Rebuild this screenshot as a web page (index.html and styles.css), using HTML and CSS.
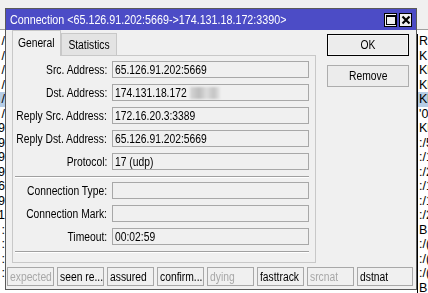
FILE: index.html
```html
<!DOCTYPE html>
<html>
<head>
<meta charset="utf-8">
<link rel="stylesheet" href="styles.css">
</head>
<body>
<div class="desk">
  <div class="bg-top"></div>
  <div class="bg-list bg-left">
    <div class="li">/</div><div class="li">/</div><div class="li">/</div><div class="li">/</div><div class="li sel">/</div>
    <div class="li">/</div><div class="li">9</div><div class="li">9</div><div class="li">9</div><div class="li">9</div>
    <div class="li">6</div><div class="li">9</div><div class="li">1</div><div class="li">:</div><div class="li">:</div><div class="li">:</div><div class="li">:</div>
  </div>
  <div class="bg-list bg-right">
    <div class="li">R</div><div class="li">K</div><div class="li">Kl</div><div class="li">Kl</div><div class="li sel">Kl</div>
    <div class="li">'0</div><div class="li">Kl</div><div class="li">:/5</div><div class="li">:/1</div><div class="li">:/2</div>
    <div class="li">:/1</div><div class="li">:/1</div><div class="li">:/2</div><div class="li">B.</div><div class="li">:/(</div>
    <div class="li">:/(</div><div class="li">:/(</div><div class="li">B</div>
  </div>

  <div class="window">
    <div class="titlebar">
      <span class="title"><span class="t">Connection &lt;65.126.91.202:5669-&gt;174.131.18.172:3390&gt;</span></span>
      <span class="tbtn">
        <svg width="10" height="10" viewBox="0 0 10 10"><rect x="0.5" y="0.5" width="9" height="9" fill="none" stroke="#000"/><rect x="0" y="0" width="10" height="2" fill="#000"/></svg>
      </span>
      <span class="tbtn">
        <svg width="10" height="10" viewBox="0 0 10 10"><path d="M1.5 1.5 L8.5 8.5 M8.5 1.5 L1.5 8.5" stroke="#000" stroke-width="2.2"/></svg>
      </span>
    </div>
    <div class="body">
      <div class="main">
        <div class="tabs">
          <div class="tab active"><span class="t c">General</span></div>
          <div class="tab stat"><span class="t c">Statistics</span></div>
        </div>
        <div class="panel">
          <div class="row"><span class="lbl"><span class="t r">Src. Address:</span></span><span class="box"><span class="t">65.126.91.202:5669</span></span></div>
          <div class="row"><span class="lbl"><span class="t r">Dst. Address:</span></span><span class="box"><span class="t">174.131.18.172</span><span class="blur"></span></span></div>
          <div class="row"><span class="lbl"><span class="t r">Reply Src. Address:</span></span><span class="box"><span class="t">172.16.20.3:3389</span></span></div>
          <div class="row"><span class="lbl"><span class="t r">Reply Dst. Address:</span></span><span class="box"><span class="t">65.126.91.202:5669</span></span></div>
          <div class="row"><span class="lbl"><span class="t r">Protocol:</span></span><span class="box"><span class="t">17 (udp)</span></span></div>
          <div class="sep sep1"></div>
          <div class="row"><span class="lbl"><span class="t r">Connection Type:</span></span><span class="box"></span></div>
          <div class="row"><span class="lbl"><span class="t r">Connection Mark:</span></span><span class="box"></span></div>
          <div class="row"><span class="lbl"><span class="t r">Timeout:</span></span><span class="box"><span class="t">00:02:59</span></span></div>
          <div class="sep sep2"></div>
        </div>
      </div>
      <div class="side">
        <div class="btn default"><span class="t c">OK</span></div>
        <div class="btn"><span class="t c">Remove</span></div>
      </div>
    </div>
    <div class="status">
      <span class="st off"><span class="t">expected</span></span>
      <span class="st"><span class="t">seen re...</span></span>
      <span class="st"><span class="t">assured</span></span>
      <span class="st"><span class="t">confirm...</span></span>
      <span class="st off"><span class="t">dying</span></span>
      <span class="st"><span class="t">fasttrack</span></span>
      <span class="st off"><span class="t">srcnat</span></span>
      <span class="st last"><span class="t">dstnat</span></span>
    </div>
  </div>
</div>
</body>
</html>
```
FILE: styles.css
```css
html, body {
  margin: 0;
  padding: 0;
}
body {
  width: 428px;
  height: 293px;
  overflow: hidden;
  font-family: "Liberation Sans", Arial, sans-serif;
  font-size: 12.5px;
  color: #000;
  background: #ffffff;
}
.t {
  display: inline-block;
  flex: none;
  white-space: nowrap;
  transform: scaleX(0.825);
  transform-origin: left center;
}
.t.r {
  transform-origin: right center;
}
.t.c {
  transform-origin: center center;
}
.desk {
  position: relative;
  width: 428px;
  height: 293px;
  background: #ffffff;
}
.bg-top {
  height: 30px;
  background: #f0f0f0;
  border-bottom: 1px solid #a0a0a0;
  box-sizing: border-box;
}
.bg-list {
  position: absolute;
  top: 34px;
  line-height: 14.5px;
  font-size: 12.5px;
}
.bg-left {
  left: -4px;
  width: 9px;
  text-align: right;
}
.bg-right {
  left: 417px;
  width: 11px;
  border-left: 1px solid #000;
}
.li {
  height: 14.5px;
  white-space: nowrap;
  overflow: hidden;
  padding-left: 1px;
}
.li.sel {
  background: #b6cde6;
}
.window {
  position: absolute;
  left: 5px;
  top: 8px;
  width: 412px;
  height: 282px;
  box-sizing: border-box;
  border: 1px solid #5a5a5a;
  background: #f0f0f0;
  display: flex;
  flex-direction: column;
}
.titlebar {
  height: 21px;
  flex: none;
  background: #4c4cc6;
  display: flex;
  align-items: center;
  padding-left: 4px;
  padding-right: 4px;
  color: #fff;
}
.title {
  font-size: 13px;
  flex: 1;
  white-space: nowrap;
  overflow: hidden;
}
.tbtn {
  width: 11px;
  height: 12px;
  border: 1px solid #000;
  background: #f0f0f0;
  display: flex;
  align-items: center;
  justify-content: center;
  margin-left: 2px;
}
.body {
  display: flex;
  padding-left: 6px;
  flex: none;
}
.main {
  width: 304px;
}
.tabs {
  display: flex;
  height: 25px;
  align-items: flex-end;
}
.tab {
  box-sizing: border-box;
  height: 22px;
  border: 1px solid #c8c8c8;
  border-bottom: none;
  background: #e3e3e3;
  display: flex;
  align-items: center;
  justify-content: center;
}
.tab.stat {
  width: 56px;
}
.tab.active {
  height: 26px;
  margin-bottom: -1px;
  width: 49px;
  padding-bottom: 2px;
  background: #f0f0f0;
  position: relative;
  z-index: 1;
}
.panel {
  box-sizing: border-box;
  height: 208px;
  border: 1px solid #c8c8c8;
  padding-top: 5px;
}
.row {
  display: flex;
  align-items: center;
  height: 17px;
  margin-bottom: 6px;
}
.lbl {
  width: 94px;
  flex: none;
  display: flex;
  justify-content: flex-end;
  margin-right: 5px;
}
.box {
  box-sizing: border-box;
  width: 197px;
  height: 17px;
  border: 1px solid #a8a8a8;
  padding-left: 2px;
  white-space: nowrap;
  display: flex;
  align-items: center;
  overflow: hidden;
}
.blur {
  display: inline-block;
  flex: none;
  width: 30px;
  height: 12px;
  margin-left: -12px;
  background: linear-gradient(90deg, #d8d8d8 0, #bdbdbd 30%, #dcdcdc 55%, #c4c4c4 80%, #e6e6e6 100%);
  filter: blur(1.2px);
}
.sep {
  margin-left: 2px;
  width: 294px;
  height: 1px;
  background: #a0a0a0;
  border-bottom: 1px solid #ffffff;
}
.sep1 {
  margin-top: 4px;
  margin-bottom: 4px;
}
.sep2 {
  margin-top: 2px;
}
.side {
  margin-left: 11px;
  width: 82px;
  display: flex;
  flex-direction: column;
}
.btn {
  box-sizing: border-box;
  height: 22px;
  border: 1px solid #adadad;
  background: #ececec;
  display: flex;
  align-items: center;
  justify-content: center;
  margin-top: 9px;
}
.btn.default {
  margin-top: 4px;
  border: 1px solid #000;
  box-shadow: inset 0 0 0 1px #f5f5f5;
}
.status {
  display: flex;
  margin-top: 4px;
  padding-left: 1px;
  padding-right: 3px;
  gap: 3px;
}
.st {
  box-sizing: border-box;
  width: 47px;
  height: 19px;
  border: 1px solid #a8a8a8;
  padding-left: 2px;
  display: flex;
  align-items: center;
  white-space: nowrap;
  overflow: hidden;
}
.st.off {
  color: #a8a8a8;
}
.st.last {
  flex: 1;
}
```
